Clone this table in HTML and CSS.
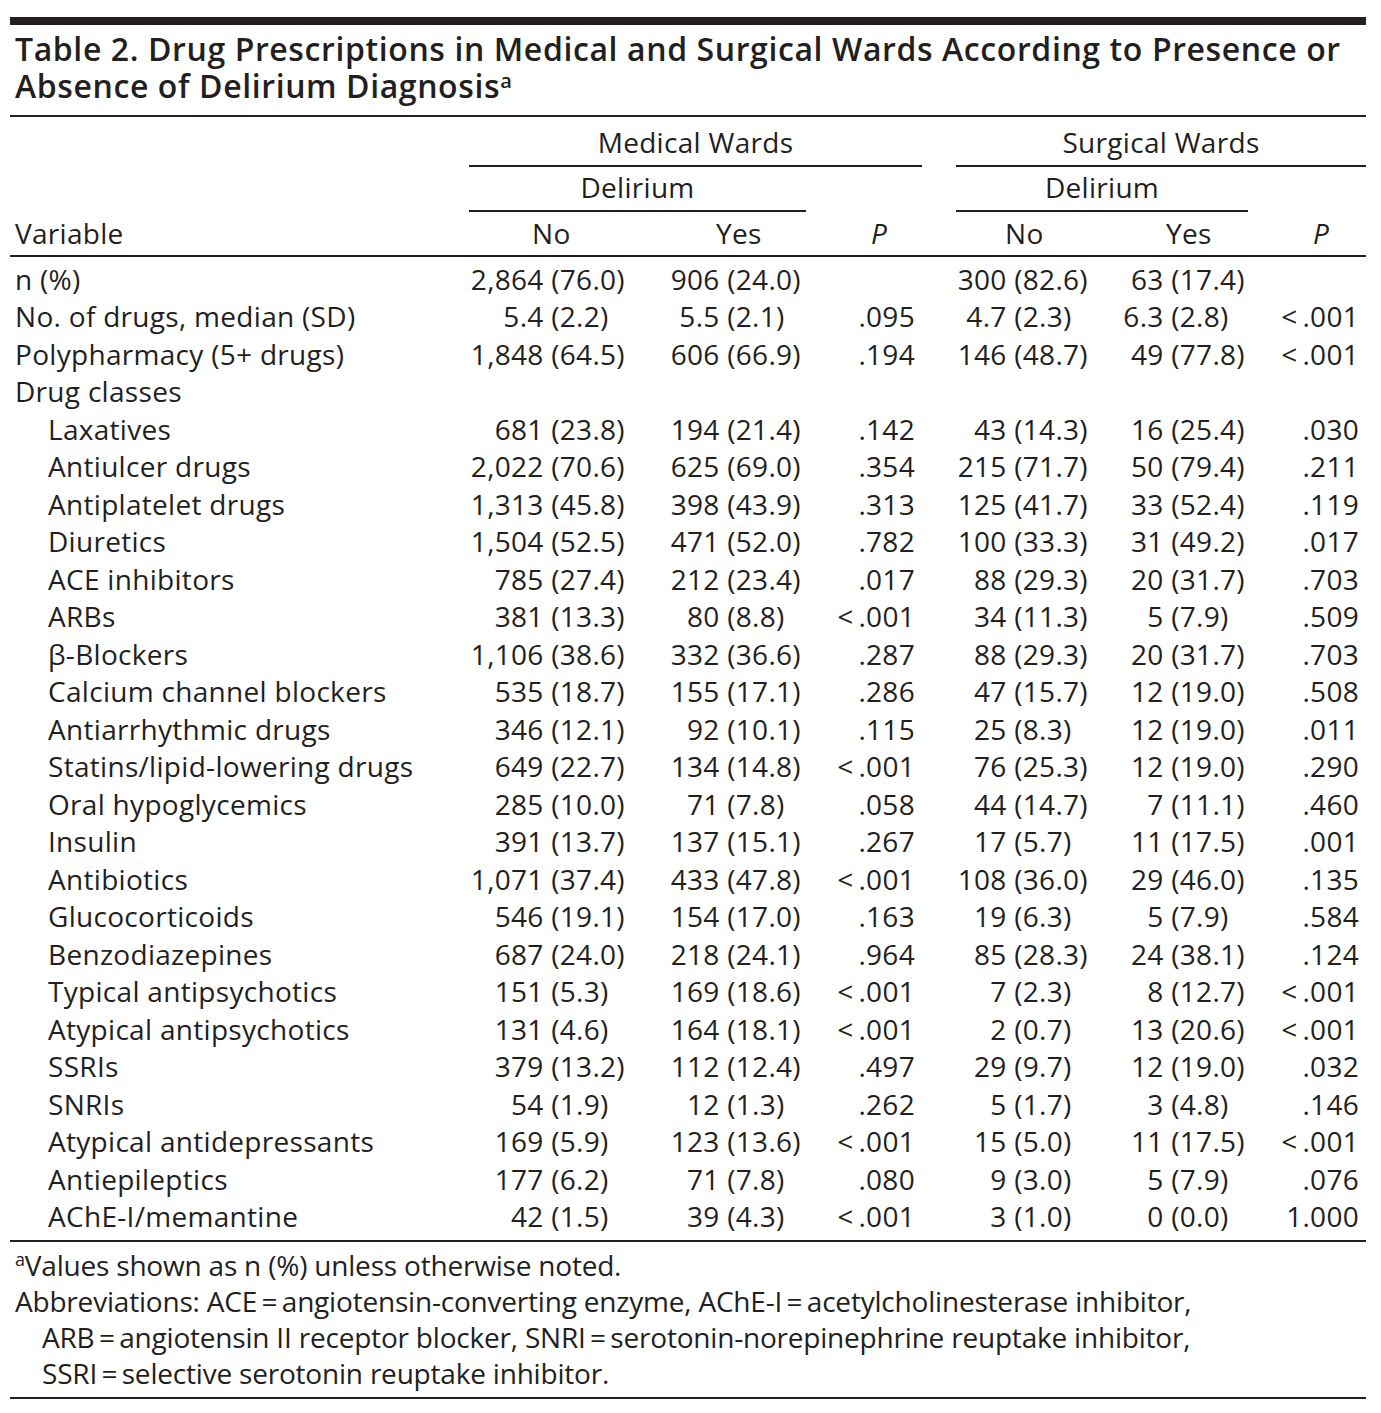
FILE: index.html
```html
<!DOCTYPE html>
<html lang="en">
<head>
<meta charset="utf-8">
<title>Table 2. Drug Prescriptions</title>
<link rel="stylesheet" href="styles.css">
</head>
<body>
<div class="doc">
  <div class="top-rule"></div>
  <h1 class="title"><span class="tl">Table 2. Drug Prescriptions in Medical and Surgical Wards According to Presence or</span><span class="tl">Absence of Delirium Diagnosis<sup>a</sup></span></h1>
  <table class="t">
    <colgroup>
      <col class="w-lab"><col class="w-mn"><col class="w-my"><col class="w-mp"><col class="w-gap"><col class="w-sn"><col class="w-sy"><col class="w-sp">
    </colgroup>
    <thead>
      <tr class="hr1">
        <th></th>
        <th colspan="3"><div class="grp g1">Medical Wards</div></th>
        <th></th>
        <th colspan="3"><div class="grp g1">Surgical Wards</div></th>
      </tr>
      <tr class="hr2">
        <th></th>
        <th colspan="2"><div class="grp g2">Delirium</div></th>
        <th></th>
        <th></th>
        <th colspan="2"><div class="grp g2">Delirium</div></th>
        <th></th>
      </tr>
      <tr class="hr3">
        <th class="lab">Variable</th>
        <th class="h-mn">No</th>
        <th class="h-my">Yes</th>
        <th class="h-mp"><i>P</i></th>
        <th></th>
        <th class="h-sn">No</th>
        <th class="h-sy">Yes</th>
        <th class="h-sp"><i>P</i></th>
      </tr>
    </thead>
    <tbody>
      <tr><td class="lab">n (%)</td><td class="mn"><span class="c">2,864</span> (76.0)</td><td class="my"><span class="c">906</span> (24.0)</td><td class="mp"></td><td></td><td class="sn"><span class="c">300</span> (82.6)</td><td class="sy"><span class="c">63</span> (17.4)</td><td class="sp"></td></tr>
      <tr><td class="lab">No. of drugs, median (SD)</td><td class="mn"><span class="c">5.4</span> (2.2)</td><td class="my"><span class="c">5.5</span> (2.1)</td><td class="mp">.095</td><td></td><td class="sn"><span class="c">4.7</span> (2.3)</td><td class="sy"><span class="c">6.3</span> (2.8)</td><td class="sp">&lt;&#8201;.001</td></tr>
      <tr><td class="lab">Polypharmacy (5+ drugs)</td><td class="mn"><span class="c">1,848</span> (64.5)</td><td class="my"><span class="c">606</span> (66.9)</td><td class="mp">.194</td><td></td><td class="sn"><span class="c">146</span> (48.7)</td><td class="sy"><span class="c">49</span> (77.8)</td><td class="sp">&lt;&#8201;.001</td></tr>
      <tr><td class="lab">Drug classes</td><td class="mn"></td><td class="my"></td><td class="mp"></td><td></td><td class="sn"></td><td class="sy"></td><td class="sp"></td></tr>
      <tr><td class="lab sub">Laxatives</td><td class="mn"><span class="c">681</span> (23.8)</td><td class="my"><span class="c">194</span> (21.4)</td><td class="mp">.142</td><td></td><td class="sn"><span class="c">43</span> (14.3)</td><td class="sy"><span class="c">16</span> (25.4)</td><td class="sp">.030</td></tr>
      <tr><td class="lab sub">Antiulcer drugs</td><td class="mn"><span class="c">2,022</span> (70.6)</td><td class="my"><span class="c">625</span> (69.0)</td><td class="mp">.354</td><td></td><td class="sn"><span class="c">215</span> (71.7)</td><td class="sy"><span class="c">50</span> (79.4)</td><td class="sp">.211</td></tr>
      <tr><td class="lab sub">Antiplatelet drugs</td><td class="mn"><span class="c">1,313</span> (45.8)</td><td class="my"><span class="c">398</span> (43.9)</td><td class="mp">.313</td><td></td><td class="sn"><span class="c">125</span> (41.7)</td><td class="sy"><span class="c">33</span> (52.4)</td><td class="sp">.119</td></tr>
      <tr><td class="lab sub">Diuretics</td><td class="mn"><span class="c">1,504</span> (52.5)</td><td class="my"><span class="c">471</span> (52.0)</td><td class="mp">.782</td><td></td><td class="sn"><span class="c">100</span> (33.3)</td><td class="sy"><span class="c">31</span> (49.2)</td><td class="sp">.017</td></tr>
      <tr><td class="lab sub">ACE inhibitors</td><td class="mn"><span class="c">785</span> (27.4)</td><td class="my"><span class="c">212</span> (23.4)</td><td class="mp">.017</td><td></td><td class="sn"><span class="c">88</span> (29.3)</td><td class="sy"><span class="c">20</span> (31.7)</td><td class="sp">.703</td></tr>
      <tr><td class="lab sub">ARBs</td><td class="mn"><span class="c">381</span> (13.3)</td><td class="my"><span class="c">80</span> (8.8)</td><td class="mp">&lt;&#8201;.001</td><td></td><td class="sn"><span class="c">34</span> (11.3)</td><td class="sy"><span class="c">5</span> (7.9)</td><td class="sp">.509</td></tr>
      <tr><td class="lab sub">β-Blockers</td><td class="mn"><span class="c">1,106</span> (38.6)</td><td class="my"><span class="c">332</span> (36.6)</td><td class="mp">.287</td><td></td><td class="sn"><span class="c">88</span> (29.3)</td><td class="sy"><span class="c">20</span> (31.7)</td><td class="sp">.703</td></tr>
      <tr><td class="lab sub">Calcium channel blockers</td><td class="mn"><span class="c">535</span> (18.7)</td><td class="my"><span class="c">155</span> (17.1)</td><td class="mp">.286</td><td></td><td class="sn"><span class="c">47</span> (15.7)</td><td class="sy"><span class="c">12</span> (19.0)</td><td class="sp">.508</td></tr>
      <tr><td class="lab sub">Antiarrhythmic drugs</td><td class="mn"><span class="c">346</span> (12.1)</td><td class="my"><span class="c">92</span> (10.1)</td><td class="mp">.115</td><td></td><td class="sn"><span class="c">25</span> (8.3)</td><td class="sy"><span class="c">12</span> (19.0)</td><td class="sp">.011</td></tr>
      <tr><td class="lab sub">Statins/lipid-lowering drugs</td><td class="mn"><span class="c">649</span> (22.7)</td><td class="my"><span class="c">134</span> (14.8)</td><td class="mp">&lt;&#8201;.001</td><td></td><td class="sn"><span class="c">76</span> (25.3)</td><td class="sy"><span class="c">12</span> (19.0)</td><td class="sp">.290</td></tr>
      <tr><td class="lab sub">Oral hypoglycemics</td><td class="mn"><span class="c">285</span> (10.0)</td><td class="my"><span class="c">71</span> (7.8)</td><td class="mp">.058</td><td></td><td class="sn"><span class="c">44</span> (14.7)</td><td class="sy"><span class="c">7</span> (11.1)</td><td class="sp">.460</td></tr>
      <tr><td class="lab sub">Insulin</td><td class="mn"><span class="c">391</span> (13.7)</td><td class="my"><span class="c">137</span> (15.1)</td><td class="mp">.267</td><td></td><td class="sn"><span class="c">17</span> (5.7)</td><td class="sy"><span class="c">11</span> (17.5)</td><td class="sp">.001</td></tr>
      <tr><td class="lab sub">Antibiotics</td><td class="mn"><span class="c">1,071</span> (37.4)</td><td class="my"><span class="c">433</span> (47.8)</td><td class="mp">&lt;&#8201;.001</td><td></td><td class="sn"><span class="c">108</span> (36.0)</td><td class="sy"><span class="c">29</span> (46.0)</td><td class="sp">.135</td></tr>
      <tr><td class="lab sub">Glucocorticoids</td><td class="mn"><span class="c">546</span> (19.1)</td><td class="my"><span class="c">154</span> (17.0)</td><td class="mp">.163</td><td></td><td class="sn"><span class="c">19</span> (6.3)</td><td class="sy"><span class="c">5</span> (7.9)</td><td class="sp">.584</td></tr>
      <tr><td class="lab sub">Benzodiazepines</td><td class="mn"><span class="c">687</span> (24.0)</td><td class="my"><span class="c">218</span> (24.1)</td><td class="mp">.964</td><td></td><td class="sn"><span class="c">85</span> (28.3)</td><td class="sy"><span class="c">24</span> (38.1)</td><td class="sp">.124</td></tr>
      <tr><td class="lab sub">Typical antipsychotics</td><td class="mn"><span class="c">151</span> (5.3)</td><td class="my"><span class="c">169</span> (18.6)</td><td class="mp">&lt;&#8201;.001</td><td></td><td class="sn"><span class="c">7</span> (2.3)</td><td class="sy"><span class="c">8</span> (12.7)</td><td class="sp">&lt;&#8201;.001</td></tr>
      <tr><td class="lab sub">Atypical antipsychotics</td><td class="mn"><span class="c">131</span> (4.6)</td><td class="my"><span class="c">164</span> (18.1)</td><td class="mp">&lt;&#8201;.001</td><td></td><td class="sn"><span class="c">2</span> (0.7)</td><td class="sy"><span class="c">13</span> (20.6)</td><td class="sp">&lt;&#8201;.001</td></tr>
      <tr><td class="lab sub">SSRIs</td><td class="mn"><span class="c">379</span> (13.2)</td><td class="my"><span class="c">112</span> (12.4)</td><td class="mp">.497</td><td></td><td class="sn"><span class="c">29</span> (9.7)</td><td class="sy"><span class="c">12</span> (19.0)</td><td class="sp">.032</td></tr>
      <tr><td class="lab sub">SNRIs</td><td class="mn"><span class="c">54</span> (1.9)</td><td class="my"><span class="c">12</span> (1.3)</td><td class="mp">.262</td><td></td><td class="sn"><span class="c">5</span> (1.7)</td><td class="sy"><span class="c">3</span> (4.8)</td><td class="sp">.146</td></tr>
      <tr><td class="lab sub">Atypical antidepressants</td><td class="mn"><span class="c">169</span> (5.9)</td><td class="my"><span class="c">123</span> (13.6)</td><td class="mp">&lt;&#8201;.001</td><td></td><td class="sn"><span class="c">15</span> (5.0)</td><td class="sy"><span class="c">11</span> (17.5)</td><td class="sp">&lt;&#8201;.001</td></tr>
      <tr><td class="lab sub">Antiepileptics</td><td class="mn"><span class="c">177</span> (6.2)</td><td class="my"><span class="c">71</span> (7.8)</td><td class="mp">.080</td><td></td><td class="sn"><span class="c">9</span> (3.0)</td><td class="sy"><span class="c">5</span> (7.9)</td><td class="sp">.076</td></tr>
      <tr class="last"><td class="lab sub">AChE-I/memantine</td><td class="mn"><span class="c">42</span> (1.5)</td><td class="my"><span class="c">39</span> (4.3)</td><td class="mp">&lt;&#8201;.001</td><td></td><td class="sn"><span class="c">3</span> (1.0)</td><td class="sy"><span class="c">0</span> (0.0)</td><td class="sp">1.000</td></tr>
    </tbody>
  </table>
  <div class="notes">
    <p class="note"><sup>a</sup>Values shown as n (%) unless otherwise noted.</p>
    <p class="note hang">Abbreviations: ACE&#8201;=&#8201;angiotensin-converting enzyme, AChE-I&#8201;=&#8201;acetylcholinesterase inhibitor,<br>ARB&#8201;=&#8201;angiotensin II receptor blocker, SNRI&#8201;=&#8201;serotonin-norepinephrine reuptake inhibitor,<br>SSRI&#8201;=&#8201;selective serotonin reuptake inhibitor.</p>
  </div>
</div>
</body>
</html>
```

FILE: styles.css
```css
html, body {
  margin: 0;
  padding: 0;
  background: #ffffff;
}

body {
  font-family: "Open Sans", "Liberation Sans", sans-serif;
  color: #231f20;
}

.doc {
  width: 1356px;
  margin: 17px 0 0 10px;
}

.top-rule {
  height: 8px;
  background: #231f20;
}

.title {
  margin: 0;
  padding: 5px 0 11px 5px;
  font-size: 32px;
  line-height: 37px;
  font-weight: 600;
  letter-spacing: 0.6px;
  white-space: nowrap;
  border-bottom: 2px solid #231f20;
}

.tl {
  display: block;
  height: 37px;
  overflow: visible;
}

.title sup {
  font-size: 20px;
  line-height: 0;
  vertical-align: 10px;
  letter-spacing: 0;
}

.t {
  width: 1356px;
  margin-top: 7px;
  table-layout: fixed;
  border-collapse: separate;
  border-spacing: 0;
  font-size: 28px;
  letter-spacing: 0.3px;
}

.w-lab { width: 459px; }
.w-mn { width: 181px; }
.w-my { width: 156px; }
.w-mp { width: 116px; }
.w-gap { width: 34px; }
.w-sn { width: 162px; }
.w-sy { width: 130px; }
.w-sp { width: 118px; }

.t th,
.t td {
  padding: 0;
  line-height: 37.5px;
  font-weight: 400;
  white-space: nowrap;
  text-align: left;
  vertical-align: bottom;
}

.grp {
  text-align: center;
  border-bottom: 2px solid #231f20;
}

.g1 { padding-bottom: 3px; }

.hr2 th { padding-top: 2px; }
.g2 { padding-bottom: 4px; }

.hr3 th {
  padding-top: 3px;
  padding-bottom: 2px;
  border-bottom: 2px solid #231f20;
}

.t .lab { padding-left: 5px; }
.t .lab.sub { padding-left: 38px; }

.t .h-mn { padding-left: 63px; }
.t .h-my { padding-left: 66px; }
.t .h-mp { padding-left: 65px; }
.t .h-sn { padding-left: 49px; }
.t .h-sy { padding-left: 48px; }
.t .h-sp { padding-left: 65px; }

.c {
  display: inline-block;
  text-align: right;
}

.t .mn { padding-left: 1px; }
.mn .c { width: 4.6ch; }

.t .my { padding-left: 20px; }
.my .c { width: 3.1ch; }

.t .sn { padding-left: 1px; }
.sn .c { width: 3.1ch; }

.t .sy { padding-left: 4px; }
.sy .c { width: 2.6ch; }

.t .mp {
  text-align: right;
  padding-right: 7px;
}

.t .sp {
  text-align: right;
  padding-right: 7px;
}

.t tbody tr:first-child td { padding-top: 4px; }

.t tr.last td {
  padding-bottom: 4px;
  border-bottom: 2px solid #231f20;
}

.notes {
  padding: 5px 0 6px 5px;
  border-bottom: 2px solid #231f20;
  font-size: 28px;
  line-height: 36px;
  letter-spacing: -0.2px;
}

.note {
  margin: 0;
  white-space: nowrap;
}

.note sup {
  font-size: 18px;
  line-height: 0;
  vertical-align: 10px;
}

.hang {
  padding-left: 27px;
  text-indent: -27px;
}
```
